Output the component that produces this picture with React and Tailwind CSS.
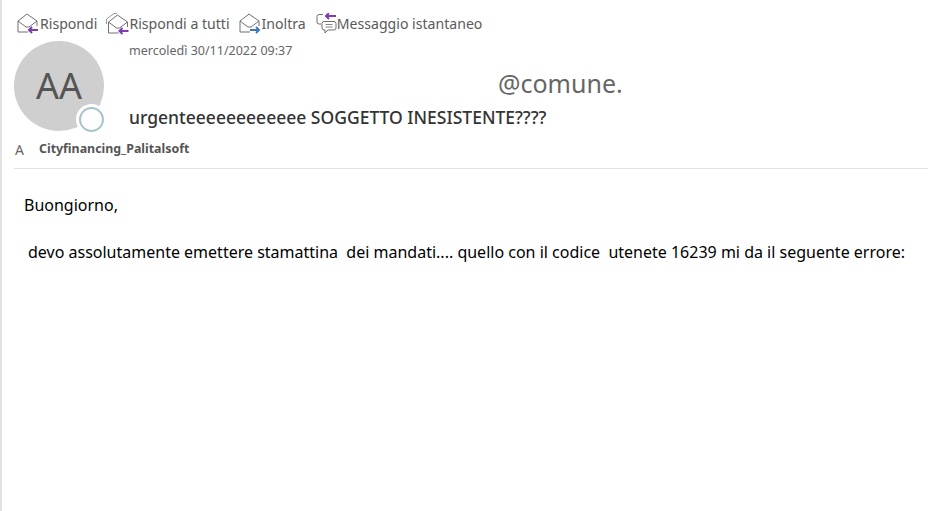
const FONT = "font-['Noto_Sans','Open_Sans',sans-serif]";

const Flap = () => (
  <path d="M1 8 L10 1 L20 8 M1 8 V19 H11 M1 8 L9 14 H12 L20 8 V13" stroke="#707070" strokeWidth="1" />
);

// envelope opened, arrow drawn over it
const Envelope = ({ arrow, forward, back }) => (
  <svg width="23" height="22" viewBox="0 0 23 22" fill="none" className="shrink-0">
    {back && <path d="M0.5 11 V6 L8 0.5 H11" stroke="#9a9a9a" strokeWidth="1" />}
    <g transform={back ? "translate(1.5 1)" : undefined}>
      <Flap />
      <path
        d={forward ? "M11 17 H20 M17 14 L20 17 L17 20" : "M21 17 H12 M15 14 L12 17 L15 20"}
        stroke={arrow}
        strokeWidth="2"
      />
    </g>
  </svg>
);

const Chat = () => (
  <svg width="21" height="22" viewBox="0 0 21 22" fill="none" className="shrink-0">
    <path d="M7 1.5 H3 Q1 1.5 1 3.5 V9 Q1 11 3 11 H5" stroke="#707070" strokeWidth="1" />
    <path d="M20 3 H10 M13 0 L10 3 L13 6" stroke="#7b3fb0" strokeWidth="2" />
    <path d="M8 8.5 H18 Q20 8.5 20 10.5 V15 Q20 17 18 17 H12 L9 20 V17 H8 Q6 17 6 15 V10.5 Q6 8.5 8 8.5 Z" stroke="#707070" strokeWidth="1" />
    <path d="M9.5 11.5 H16.5 M9.5 14 H16.5" stroke="#8a8a8a" strokeWidth="1" />
  </svg>
);

const Action = ({ icon, label }) => (
  <div className="flex items-center">
    {icon}
    <span className="text-[14.1px] text-[#5a5a5a]">{label}</span>
  </div>
);

export default function App() {
  return (
    <div className={`${FONT} w-[928px] h-[511px] bg-white border-l-2 border-[#e2e2e2] overflow-hidden`}>
      {/* Toolbar */}
      <div className="flex items-center gap-[9px] pl-[15px] pt-[13px] h-[35px]">
        <Action icon={<Envelope arrow="#7b3fb0" />} label="Rispondi" />
        <Action icon={<Envelope arrow="#7b3fb0" back />} label="Rispondi a tutti" />
        <Action icon={<Envelope arrow="#3f78b8" forward />} label="Inoltra" />
        <div className="ml-[1px]">
          <Action icon={<Chat />} label="Messaggio istantaneo" />
        </div>
      </div>

      {/* Header */}
      <div className="flex pl-[12px] pt-[6px]">
        <div className="relative w-[90px] h-[90px] rounded-full bg-[#cfcfcf] flex items-center justify-center shrink-0">
          <span className="text-[36px] text-[#555555]">AA</span>
          <div className="absolute left-[62px] top-[63px] w-[31px] h-[31px] rounded-full bg-white flex items-center justify-center">
            <div className="w-[25px] h-[25px] rounded-full border-2 border-[#a9c4cf]" />
          </div>
        </div>
        <div className="flex flex-col pl-[25px] pt-[1px] flex-1">
          <div className="text-[12.5px] text-[#666666] leading-[18px]">mercoledì 30/11/2022 09:37</div>
          <div className="text-[25px] text-[#666666] leading-[32px] pl-[369px] mt-[7px]">@comune.</div>
          <div className="text-[17.5px] font-medium text-[#333333] leading-[24px] mt-[6px]">urgenteeeeeeeeeeee SOGGETTO INESISTENTE????</div>
        </div>
      </div>

      {/* Recipient */}
      <div className="flex items-center pl-[13px] mt-[6px] h-[24px]">
        <span className="text-[14px] text-[#666666] w-[24px]">A</span>
        <span className="text-[12.4px] font-bold text-[#555555]">Cityfinancing_Palitalsoft</span>
      </div>
      <div className="ml-[12px] mt-[7px] border-t border-[#e3e3e3]" />

      {/* Body */}
      <div className="text-[16px] text-black leading-[20px] pl-[22px] pt-[26px]">
        <p>Buongiorno,</p>
        <p className="mt-[27px] pl-[4px] whitespace-pre">devo assolutamente emettere stamattina  dei mandati.... quello con il codice  utenete 16239 mi da il seguente errore:</p>
      </div>
    </div>
  );
}
